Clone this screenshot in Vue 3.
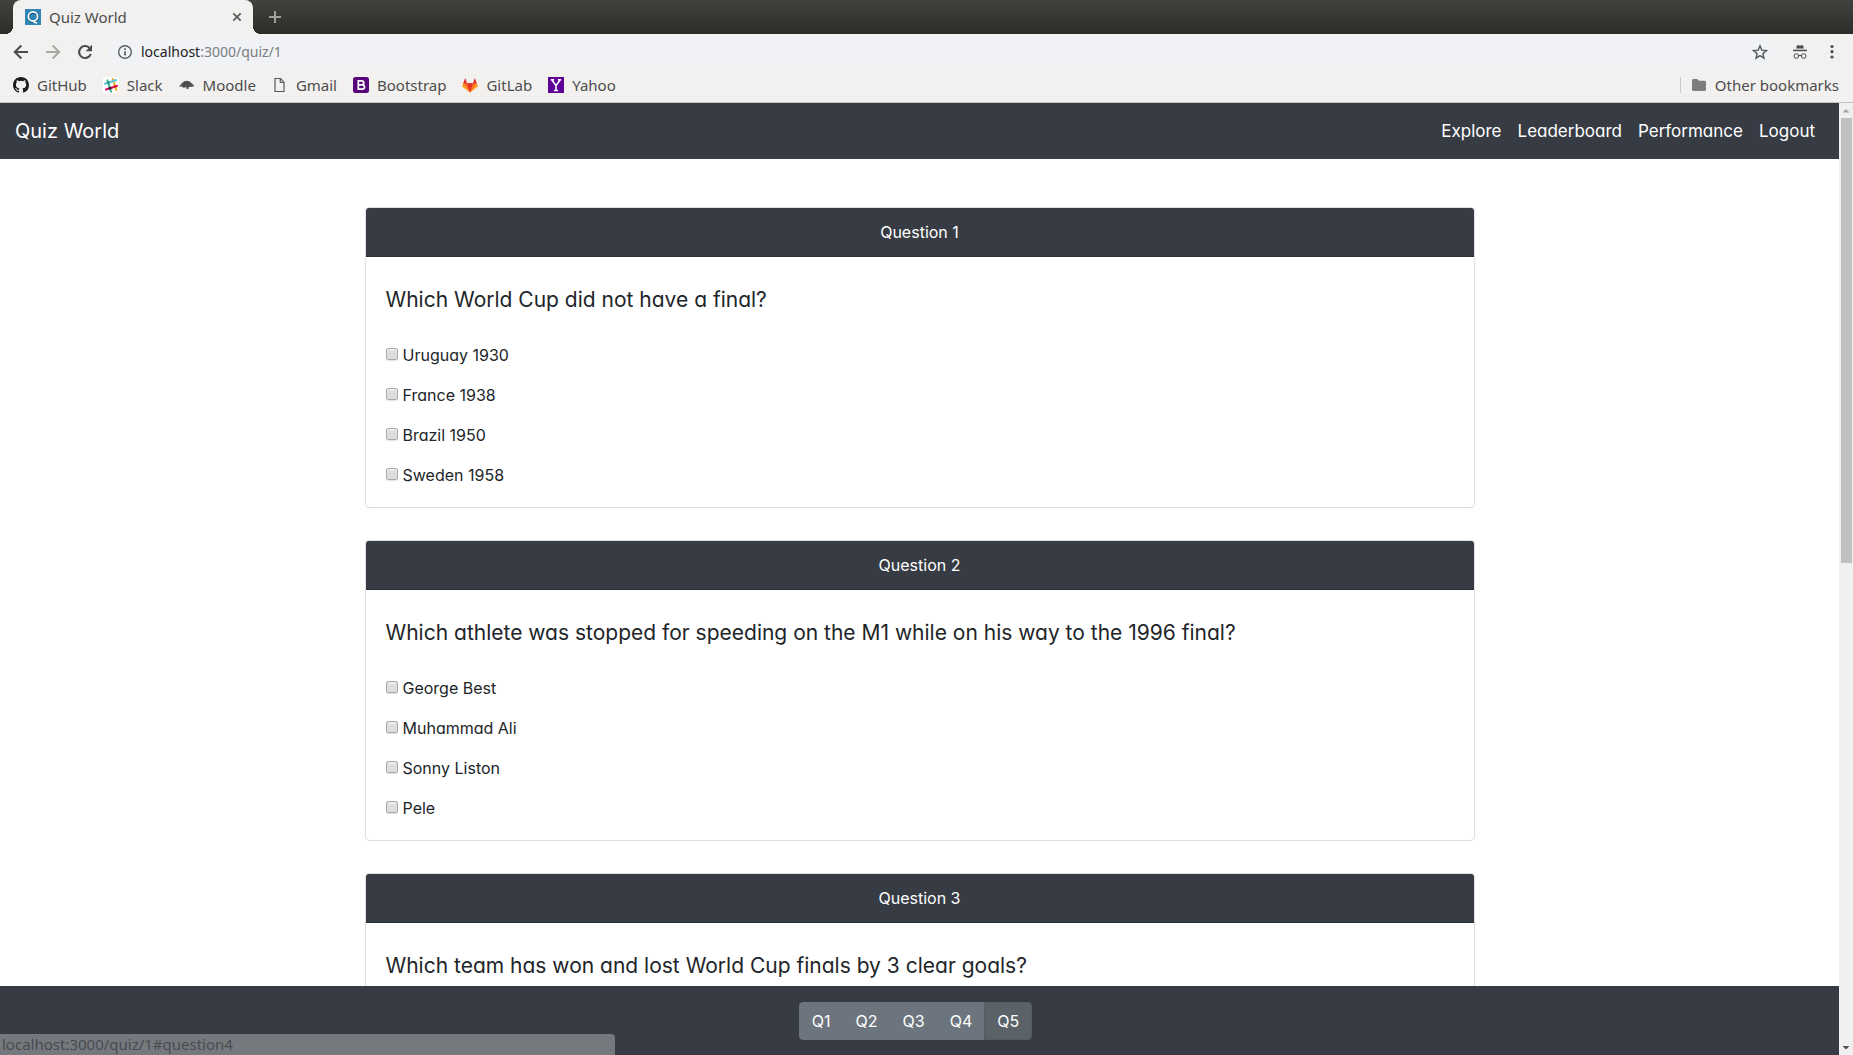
<script setup>
import { ref } from 'vue'

const bookmarks = [
  { id: 'github', label: 'GitHub' },
  { id: 'slack', label: 'Slack' },
  { id: 'moodle', label: 'Moodle' },
  { id: 'gmail', label: 'Gmail' },
  { id: 'bootstrap', label: 'Bootstrap' },
  { id: 'gitlab', label: 'GitLab' },
  { id: 'yahoo', label: 'Yahoo' },
]

const navLinks = ['Explore', 'Leaderboard', 'Performance', 'Logout']

const questions = [
  {
    title: 'Which World Cup did not have a final?',
    options: ['Uruguay 1930', 'France 1938', 'Brazil 1950', 'Sweden 1958'],
  },
  {
    title: 'Which athlete was stopped for speeding on the M1 while on his way to the 1996 final?',
    options: ['George Best', 'Muhammad Ali', 'Sonny Liston', 'Pele'],
  },
  {
    title: 'Which team has won and lost World Cup finals by 3 clear goals?',
    options: [],
  },
]

const jumps = ['Q1', 'Q2', 'Q3', 'Q4', 'Q5']
const activeJump = ref('Q5')
</script>

<template>
  <div class="browser">
    <div class="tabstrip">
      <div class="tab">
        <svg class="icon16" viewBox="0 0 16 16">
          <rect width="16" height="16" fill="#2f86b5" />
          <circle cx="8.3" cy="8.3" r="4.6" fill="none" stroke="#17506f" stroke-width="2.2" />
          <circle cx="8" cy="7.5" r="4.6" fill="none" stroke="#fff" stroke-width="1.7" />
          <path d="M8 12q1.500 2.300 4.200 1.600" fill="none" stroke="#fff" stroke-width="1.500" />
        </svg>
        <span class="tab-title">Quiz World</span>
        <button class="plain" aria-label="Close tab">
          <svg class="icon16" viewBox="0 0 16 16"><path d="M4.300 4.300l7.400 7.400M11.700 4.300l-7.400 7.400" stroke="#5a5a58" stroke-width="1.700" /></svg>
        </button>
      </div>
      <button class="plain new-tab" aria-label="New tab">
        <svg class="icon16" viewBox="0 0 16 16"><path d="M8 2v12M2 8h12" stroke="#a0a09c" stroke-width="2" /></svg>
      </button>
    </div>

    <div class="toolbar">
      <button class="plain" aria-label="Back">
        <svg class="icon16" viewBox="0 0 16 16"><path d="M15 8H2.500M8.300 1.500L1.800 8l6.500 6.500" fill="none" stroke="#4b4b4a" stroke-width="2" /></svg>
      </button>
      <button class="plain" aria-label="Forward">
        <svg class="icon16" viewBox="0 0 16 16"><path d="M1 8h12.500M7.700 1.500L14.200 8l-6.500 6.500" fill="none" stroke="#a9a8a6" stroke-width="2" /></svg>
      </button>
      <button class="plain" aria-label="Reload">
        <svg class="icon16" viewBox="0 0 16 16">
          <path d="M13.800 10A6 6 0 1 1 12.300 3.700" fill="none" stroke="#4b4b4a" stroke-width="2.100" />
          <path d="M15 .8v6.400H8.600z" fill="#4b4b4a" />
        </svg>
      </button>
      <div class="omnibox">
        <svg class="icon16" viewBox="0 0 16 16">
          <circle cx="8" cy="8" r="6.300" fill="none" stroke="#5a5d62" stroke-width="1.400" />
          <path d="M8 7.200v4.300M8 4.300v1.700" stroke="#5a5d62" stroke-width="1.700" />
        </svg>
        <span class="url"><span class="host">localhost</span>:3000/quiz/1</span>
        <button class="plain" aria-label="Bookmark this page">
          <svg class="icon16" viewBox="0 0 16 16"><path d="M8 1.800l1.800 4.300 4.700.4-3.600 3.100 1.100 4.600-4-2.500-4 2.500 1.100-4.600L1.500 6.500l4.700-.4z" fill="none" stroke="#55585d" stroke-width="1.400" /></svg>
        </button>
      </div>
      <svg class="icon16" viewBox="0 0 16 16">
        <path d="M4.200 4.600l.8-3.700 1.700.5h2.600l1.700-.5.8 3.700z" fill="#4b4b4a" />
        <rect x="1" y="5.700" width="14" height="1.500" fill="#4b4b4a" />
        <g fill="none" stroke="#4b4b4a"><circle cx="4.300" cy="12" r="2.300" /><circle cx="11.700" cy="12" r="2.300" /><path d="M6.600 11.700q1.400-.8 2.800 0" /></g>
      </svg>
      <button class="plain" aria-label="Menu">
        <svg class="icon16" viewBox="0 0 16 16" fill="#4b4b4a"><circle cx="8" cy="2.500" r="1.600" /><circle cx="8" cy="7.700" r="1.600" /><circle cx="8" cy="13" r="1.600" /></svg>
      </button>
    </div>

    <div class="bookmarks">
      <a v-for="b in bookmarks" :key="b.id" href="#" class="bookmark">
        <svg v-if="b.id === 'github'" class="icon16" viewBox="0 0 16 16"><path fill="#1d1a1b" d="M8 0C3.580 0 0 3.580 0 8c0 3.540 2.290 6.530 5.470 7.590.4.070.55-.17.55-.38v-1.490c-2.010.37-2.530-.49-2.690-.94-.09-.23-.48-.94-.82-1.130-.28-.15-.68-.52-.01-.53.63-.01 1.080.58 1.230.82.72 1.210 1.870.87 2.330.66.070-.52.28-.87.51-1.070-1.780-.2-3.640-.89-3.640-3.950 0-.87.31-1.590.82-2.150-.08-.2-.36-1.020.08-2.120 0 0 .67-.21 2.200.82a7.500 7.500 0 0 1 4 0c1.530-1.040 2.200-.82 2.200-.82.44 1.100.16 1.920.08 2.120.51.56.82 1.270.82 2.150 0 3.070-1.870 3.750-3.650 3.950.29.25.54.73.54 1.480v2.200c0 .21.150.46.55.38A8 8 0 0 0 16 8c0-4.420-3.580-8-8-8z" /></svg>
        <svg v-else-if="b.id === 'slack'" class="icon16" viewBox="0 0 16 16">
          <rect width="16" height="16" rx="2" fill="#fff" />
          <g stroke-width="2.200" stroke-linecap="round" fill="none">
            <path d="M9.700 2l3.600 11" stroke="#ecb32d" />
            <path d="M4.500 3.500l3.600 11" stroke="#3eb991" />
            <path d="M2 6.700l11-3.600" stroke="#63c8da" />
            <path d="M4.800 5.800l1-.3" stroke="#1a937d" />
            <path d="M3 12.500l11-3.600" stroke="#e01765" />
            <path d="M6.400 11.400l1-.3" stroke="#361238" />
            <path d="M11.500 9.700l.9-.3" stroke="#cc2027" />
          </g>
        </svg>
        <svg v-else-if="b.id === 'moodle'" class="icon16" viewBox="0 0 16 16">
          <path fill="#555" d="M0 9.500L3 6q4.500-4.500 9.500 0L15.500 9q-3.500 1.500-6 .8V12H7.500l-.3-2Q4 11.800 3.200 9.600z" />
          <path d="M6 5l-1.500 5M9 4.500v6" stroke="#333" stroke-width=".7" />
        </svg>
        <svg v-else-if="b.id === 'gmail'" class="icon16" viewBox="0 0 16 16"><path d="M3 1.500h5.500L12 5.200v9.300H3zM8.300 1.500v4H12" fill="none" stroke="#5a5a58" stroke-width="1.200" /></svg>
        <svg v-else-if="b.id === 'bootstrap'" class="icon16" viewBox="0 0 16 16">
          <rect width="16" height="16" rx="2.500" fill="#56067a" />
          <path d="M5.300 3.800h3.400q2.100 0 2.100 2t-2.100 2H5.300zm0 4h3.900q2.300 0 2.300 2.200T9.200 12.200H5.300z" fill="none" stroke="#fff" stroke-width="1.700" />
        </svg>
        <svg v-else-if="b.id === 'gitlab'" class="icon16" viewBox="0 0 16 16">
          <path fill="#fca326" d="M1.200 6L0 9.500l8 5.900 8-5.900L14.800 6z" />
          <path fill="#fc6d26" d="M1.200 6h13.600L8 15.400z" />
          <path fill="#e2332a" d="M3.200 1L1.200 6.200h3.900zM12.800 1l2 5.200h-3.900zM5.100 6.200h5.800L8 15.400z" />
        </svg>
        <svg v-else class="icon16" viewBox="0 0 16 16">
          <rect width="16" height="16" fill="#5f0096" />
          <path d="M3.700 2.700L8 8.500v5.300M12.300 2.700L8 8.500M2.800 2.700h3.400M9.800 2.700h3.400M6 13.500h4" fill="none" stroke="#fff" stroke-width="1.500" />
        </svg>
        <span>{{ b.label }}</span>
      </a>
      <a href="#" class="bookmark other">
        <svg class="icon16" viewBox="0 0 16 16"><path d="M1 3.500Q1 2 2.500 2h3.800L8 3.800h5.500q1.500 0 1.500 1.500v7.200q0 1.500-1.500 1.500h-11Q1 14 1 12.500z" fill="#7d7d7d" /></svg>
        <span>Other bookmarks</span>
      </a>
    </div>

    <div class="viewport">
      <div class="page">
        <nav class="navbar">
          <a href="#" class="brand">Quiz World</a>
          <div class="nav-links">
            <a v-for="link in navLinks" :key="link" href="#">{{ link }}</a>
          </div>
        </nav>

        <main class="content">
          <section v-for="(q, i) in questions" :key="i" class="card">
            <header class="card-header">Question {{ i + 1 }}</header>
            <div class="card-body">
              <h5 class="question">{{ q.title }}</h5>
              <label v-for="opt in q.options" :key="opt" class="option">
                <input type="checkbox" />
                <span>{{ opt }}</span>
              </label>
            </div>
          </section>
        </main>

        <footer class="footer">
          <div class="btn-group">
            <button v-for="j in jumps" :key="j" :class="{ active: j === activeJump }" @click="activeJump = j">{{ j }}</button>
          </div>
        </footer>
        <div class="status">localhost:3000/quiz/1#question4</div>
      </div>

      <div class="scrollbar">
        <svg viewBox="0 0 14 15"><path d="M3.500 9.500h7L7 6z" fill="#a3a3a3" /></svg>
        <div class="thumb"></div>
        <svg viewBox="0 0 14 15"><path d="M3.500 6h7L7 9.500z" fill="#505050" /></svg>
      </div>
    </div>
  </div>
</template>

<style>
body {
  margin: 0;
}
</style>

<style scoped>
.browser {
  display: flex;
  flex-direction: column;
  height: 100vh;
  overflow: hidden;
  background: #f2f1ef;
  color: #4c4c4c;
  font: 15px/20px "Noto Sans", "Open Sans", sans-serif;
}
.browser * {
  box-sizing: border-box;
}
a {
  color: inherit;
  text-decoration: none;
}
svg {
  display: block;
  flex: none;
}
.icon16 {
  width: 16px;
  height: 16px;
}
.plain {
  padding: 0;
  border: 0;
  background: none;
}

.tabstrip {
  display: flex;
  flex: none;
  align-items: center;
  height: 34px;
  padding-left: 13px;
  background: linear-gradient(#41413d, #2c2c29);
}
.tab {
  position: relative;
  display: flex;
  align-items: center;
  gap: 8px;
  width: 240px;
  height: 34px;
  padding: 0 8px 0 12px;
  border-radius: 8px 8px 0 0;
  background: #f2f1ef;
}
.tab::before,
.tab::after {
  content: "";
  position: absolute;
  bottom: 0;
  width: 8px;
  height: 8px;
}
.tab::before {
  right: 100%;
  background: radial-gradient(circle at 0 0, transparent 8px, #f2f1ef 8px);
}
.tab::after {
  left: 100%;
  background: radial-gradient(circle at 100% 0, transparent 8px, #f2f1ef 8px);
}
.tab-title {
  flex: 1;
}
.new-tab {
  margin-left: 14px;
}

.toolbar {
  display: flex;
  flex: none;
  align-items: center;
  gap: 16px;
  height: 36px;
  padding: 0 13px;
}
.omnibox {
  display: flex;
  flex: 1;
  align-items: center;
  gap: 8px;
  height: 28px;
  padding: 0 8px;
  border-radius: 14px;
  background: #f0f2f5;
}
.url {
  flex: 1;
  font-size: 14px;
  color: #7b7e82;
}
.host {
  color: #222;
}

.bookmarks {
  display: flex;
  flex: none;
  align-items: center;
  gap: 16px;
  height: 33px;
  padding: 0 14px 2px 13px;
  border-bottom: 1px solid #c4c4c2;
}
.bookmark {
  display: flex;
  align-items: center;
  gap: 8px;
}
.other {
  height: 16px;
  margin-left: auto;
  padding-left: 10px;
  border-left: 1px solid #cbcac8;
}

.viewport {
  display: flex;
  flex: 1;
  min-height: 0;
}
.page {
  position: relative;
  display: flex;
  flex: 1;
  flex-direction: column;
  min-width: 0;
  background: #fff;
  color: #212529;
  font: 16px/24px Inter, sans-serif;
  font-feature-settings: "cv11";
}
.navbar {
  display: flex;
  flex: none;
  align-items: center;
  justify-content: space-between;
  height: 56px;
  padding: 0 24px 0 15px;
  background: #373b43;
  color: #fff;
}
.brand {
  font-size: 20px;
}
.nav-links {
  display: flex;
  gap: 16px;
  font-size: 17px;
}
.content {
  display: flex;
  flex: 1;
  flex-direction: column;
  gap: 32px;
  width: 1110px;
  max-width: 100%;
  min-height: 0;
  margin: 0 auto;
  padding-top: 48px;
  overflow: hidden;
}
.card {
  flex: none;
  border: 1px solid #dfdfdf;
  border-radius: 4px;
  overflow: hidden;
}
.card-header {
  padding: 12px 20px;
  border-bottom: 1px solid #2b2f36;
  background: #373b43;
  color: #fff;
  text-align: center;
}
.card-body {
  display: flex;
  flex-direction: column;
  gap: 16px;
  padding: 31px 20px 20px;
}
.question {
  margin: 0 0 15px;
  font-size: 21px;
  font-weight: 400;
  line-height: 24px;
}
.option {
  display: flex;
  align-items: center;
  gap: 5px;
}
.option input {
  width: 12px;
  height: 12px;
  margin: 0 0 3px;
  appearance: none;
  border: 1px solid #a9a9a9;
  border-radius: 2px;
  background: linear-gradient(#eee, #dcdcdc 40%);
  box-shadow: 0 1px 1px #e4e4e4;
}
.footer {
  display: flex;
  flex: none;
  justify-content: center;
  height: 69px;
  padding: 16px 8px 0 0;
  background: #373b43;
}
.btn-group {
  display: flex;
  height: 38px;
}
.btn-group button {
  padding: 0 12px;
  border: 1px solid #6c757d;
  background: #6c757d;
  color: #fff;
  font: inherit;
}
.btn-group button + button {
  margin-left: -1px;
}
.btn-group button:first-child {
  border-radius: 4px 0 0 4px;
}
.btn-group button:last-child {
  border-radius: 0 4px 4px 0;
}
.btn-group .active {
  border-color: #545b62;
  background: #5a6268;
}
.status {
  position: absolute;
  bottom: 0;
  left: 0;
  width: 615px;
  height: 21px;
  padding-left: 2px;
  border-radius: 0 4px 0 0;
  background: #75797e;
  color: #484b4f;
  font: 15px/21px "Noto Sans", sans-serif;
}

.scrollbar {
  display: flex;
  flex: none;
  flex-direction: column;
  width: 14px;
  background: #f0f0f0;
}
.scrollbar svg {
  height: 15px;
}
.thumb {
  flex: 0 0 445px;
  margin: 0 1px auto 2px;
  background: #c0c0c0;
}
</style>
